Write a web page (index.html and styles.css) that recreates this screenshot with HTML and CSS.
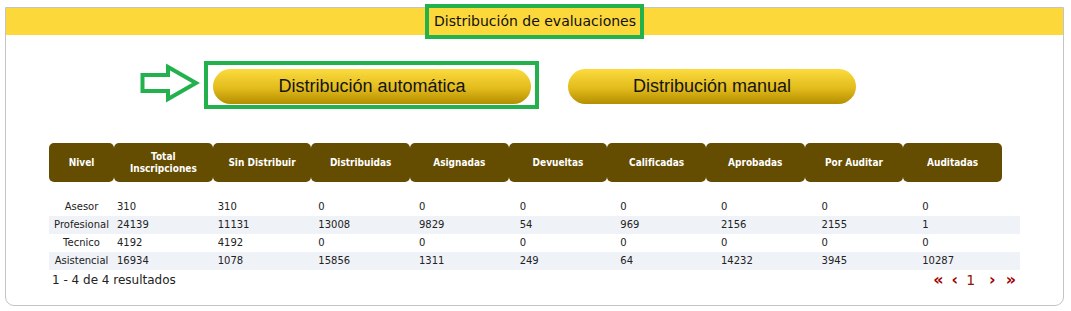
FILE: index.html
```html
<!DOCTYPE html>
<html lang="es">
<head>
    <meta charset="UTF-8">
    <title>Distribución de evaluaciones</title>
    <link rel="stylesheet" href="styles.css">
</head>
<body>
    <div class="panel">
        <div class="panel-header">
            <span class="panel-title">Distribución de evaluaciones</span>
        </div>

        <div class="actions">
            <div class="highlight">
                <svg class="pointer" width="62" height="42" viewBox="0 0 62 42">
                    <path d="M4.5 13 H30 V5 L58 21 L30 37 V29 H4.5 Z" fill="none" stroke="#22b14c" stroke-width="4"/>
                </svg>
                <button class="btn-gold btn-auto">Distribución automática</button>
            </div>
            <button class="btn-gold btn-manual">Distribución manual</button>
        </div>

        <table class="grid-head">
            <tr>
                <th class="col-nivel">Nivel</th>
                <th>Total<br>Inscripciones</th>
                <th>Sin Distribuir</th>
                <th>Distribuidas</th>
                <th>Asignadas</th>
                <th>Devueltas</th>
                <th>Calificadas</th>
                <th>Aprobadas</th>
                <th>Por Auditar</th>
                <th>Auditadas</th>
            </tr>
        </table>

        <table class="grid-body">
            <tr>
                <td class="col-nivel">Asesor</td>
                <td>310</td><td>310</td><td>0</td><td>0</td><td>0</td><td>0</td><td>0</td><td>0</td><td>0</td>
            </tr>
            <tr class="alt">
                <td class="col-nivel">Profesional</td>
                <td>24139</td><td>11131</td><td>13008</td><td>9829</td><td>54</td><td>969</td><td>2156</td><td>2155</td><td>1</td>
            </tr>
            <tr>
                <td class="col-nivel">Tecnico</td>
                <td>4192</td><td>4192</td><td>0</td><td>0</td><td>0</td><td>0</td><td>0</td><td>0</td><td>0</td>
            </tr>
            <tr class="alt">
                <td class="col-nivel">Asistencial</td>
                <td>16934</td><td>1078</td><td>15856</td><td>1311</td><td>249</td><td>64</td><td>14232</td><td>3945</td><td>10287</td>
            </tr>
        </table>

        <div class="grid-footer">
            <span class="results">1 - 4 de 4 resultados</span>
            <div class="pager">
                <span class="pg-arrow">&laquo;</span>
                <span class="pg-arrow pg-prev">&lsaquo;</span>
                <span class="pg-num">1</span>
                <span class="pg-arrow pg-next">&rsaquo;</span>
                <span class="pg-arrow pg-last">&raquo;</span>
            </div>
        </div>
    </div>
</body>
</html>
```
FILE: styles.css
```css
body {
    margin: 0;
    background: #fff;
    font-family: "DejaVu Sans", Verdana, sans-serif;
    color: #222;
}

.panel {
    margin: 7px 7px 0 5px;
    border: 1px solid #c4c4c4;
    border-radius: 0 0 9px 9px;
    padding-bottom: 15px;
}

.panel-header {
    background-color: #fdd83a;
    height: 27px;
    display: flex;
    justify-content: center;
    align-items: center;
}

.panel-title {
    box-sizing: border-box;
    height: 35px;
    border: 4px solid #22b14c;
    padding: 0 4px 0 5px;
    font-size: 14px;
    line-height: 27px;
    color: #111;
    flex-shrink: 0;
}

.actions {
    margin-top: 34px;
    display: flex;
    justify-content: center;
    gap: 37px;
}

.highlight {
    position: relative;
    display: flex;
}

.highlight:after {
    content: '';
    position: absolute;
    top: -8px;
    bottom: -5px;
    left: -9px;
    right: -8px;
    border: 4px solid #22b14c;
}

.pointer {
    position: absolute;
    left: -75px;
    top: -7px;
}

.btn-gold {
    height: 35px;
    border: 0;
    border-radius: 18px;
    background: linear-gradient(#fcdb3e, #e2bb1c 55%, #b48e00);
    font-family: "Liberation Sans", Arial, sans-serif;
    font-size: 18px;
    color: #151515;
    padding: 0;
}

.btn-auto { width: 318px; }
.btn-manual { width: 288px; }

.grid-head,
.grid-body {
    border-collapse: separate;
    border-spacing: 0;
    table-layout: fixed;
    margin-left: 43px;
}

.grid-head {
    width: 953px;
    margin-top: 39px;
}

.grid-head th {
    background-color: #644c00;
    color: #fff;
    height: 39px;
    padding: 0 4px;
    border-radius: 5px;
    font-family: "DejaVu Sans Condensed", "DejaVu Sans", sans-serif;
    font-size: 10px;
    font-weight: bold;
    line-height: 12px;
    text-align: center;
}

.col-nivel { width: 65px; }
.grid-head th.col-nivel { width: 57px; }

.grid-body {
    width: 971px;
    margin-top: 16px;
}

.grid-body td {
    height: 18px;
    padding: 0 3px;
    font-size: 10px;
    line-height: 18px;
    color: #222;
    white-space: nowrap;
}

.grid-body td.col-nivel {
    width: 59px;
    padding: 0 3px;
    text-align: center;
}

.grid-body tr.alt td { background-color: #eff2f7; }

.grid-footer {
    display: flex;
    justify-content: space-between;
    align-items: center;
    height: 20px;
    margin-left: 46px;
    width: 964px;
}

.results {
    font-size: 12px;
    color: #222;
}

.pager {
    display: flex;
    align-items: center;
    color: #a00000;
}

.pg-arrow {
    font-size: 16px;
    font-weight: bold;
    line-height: 20px;
}

.pg-prev { margin-left: 8px; }
.pg-next { margin-left: 14px; }
.pg-last { margin-left: 10px; }

.pg-num {
    font-size: 14px;
    margin-left: 8px;
    color: #8e1600;
}
```
